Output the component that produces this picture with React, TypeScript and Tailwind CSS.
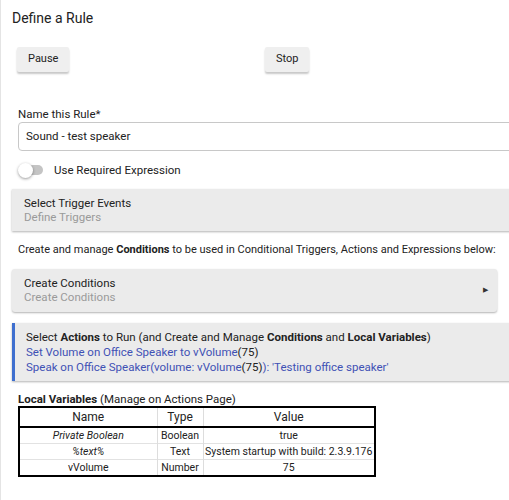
export default function App() {
    const vars = [
        { name: "Private Boolean", italic: true, type: "Boolean", value: "true" },
        { name: "%text%", italic: true, type: "Text", value: "System startup with build: 2.3.9.176" },
        { name: "vVolume", italic: false, type: "Number", value: "75" },
    ];

    return (
        <div className="w-[509px] h-[500px] overflow-hidden bg-white">
            <div className="w-[540px] h-full border-l border-[#e4e4e4] pl-[11px] pt-[10px] text-[#222] font-['Roboto',sans-serif]">
                <h1 className="text-[14px] leading-[17px] font-normal">Define a Rule</h1>

                <div className="mt-[18px] ml-[5px] grid grid-cols-[248px_248px]">
                    <div>
                        <button className="h-[25px] px-[11px] rounded-[2px] bg-[#efefef] text-[11px] shadow-[0_2px_2px_rgba(0,0,0,0.22)]">
                            Pause
                        </button>
                    </div>
                    <div>
                        <button className="h-[25px] px-[11px] rounded-[2px] bg-[#efefef] text-[11px] shadow-[0_2px_2px_rgba(0,0,0,0.22)]">
                            Stop
                        </button>
                    </div>
                </div>

                <div className="mt-[35px] ml-[6px]">
                    <div className="text-[11.5px] leading-[14px]">Name this Rule*</div>
                    <div className="mt-[1px] h-[29px] rounded-[4px] border border-[#c8c8c8] px-[7px] flex items-center text-[11.5px]">
                        Sound - test speaker
                    </div>
                </div>

                <div className="mt-[12px] ml-[6px] flex items-center gap-[11px] h-[15px]">
                    <div className="relative w-[25px] h-[15px] flex items-center">
                        <div className="ml-[3px] w-[22px] h-[10px] rounded-full bg-[#c4c4c4]" />
                        <div className="absolute left-0 top-0 w-[15px] h-[15px] rounded-full bg-white shadow-[0_1px_3px_rgba(0,0,0,0.4)]" />
                    </div>
                    <span className="text-[11.5px] leading-[15px]">Use Required Expression</span>
                </div>

                <div className="mt-[11px] h-[42px] bg-[#ebebeb] shadow-[0_1px_2px_rgba(0,0,0,0.3)] pl-[12px] pt-[7px] text-[11.5px] leading-[14px]">
                    <div>Select Trigger Events</div>
                    <div className="text-[#9a9a9a]">Define Triggers</div>
                </div>

                <p className="mt-[12px] ml-[6px] text-[11px] leading-[14px]">
                    Create and manage <b className="font-bold">Conditions</b> to be used in Conditional Triggers, Actions and Expressions below:
                </p>

                <div className="mt-[12px] w-[485px] h-[43px] rounded-[3px] bg-[#ebebeb] shadow-[0_1px_2px_rgba(0,0,0,0.3)] pl-[12px] pr-[9px] flex items-center justify-between text-[11.5px] leading-[14px]">
                    <div>
                        <div>Create Conditions</div>
                        <div className="text-[#9a9a9a]">Create Conditions</div>
                    </div>
                    <span className="text-[7px] text-[#333]">▶</span>
                </div>

                <div className="mt-[11px] h-[58px] bg-[#ebebeb] border-l-[3px] border-[#3f6fcf] shadow-[0_1px_2px_rgba(0,0,0,0.3)] pl-[11px] pt-[7px] text-[11.5px] leading-[15px]">
                    <div>
                        Select <b>Actions</b> to Run (and Create and Manage <b>Conditions</b> and <b>Local Variables</b>)
                    </div>
                    <div className="text-[#3f51b5]">
                        Set Volume on Office Speaker to vVolume<span className="text-[#222]">(75)</span>
                    </div>
                    <div className="text-[#3f51b5]">
                        Speak on Office Speaker(volume: vVolume<span className="text-[#222]">(75)</span>): 'Testing office speaker'
                    </div>
                </div>

                <div className="mt-[11px] ml-[6px] text-[11.5px] leading-[14px]">
                    <b>Local Variables</b> (Manage on Actions Page)
                </div>
                <table className="ml-[6px] w-[358px] table-fixed border-collapse border-2 border-black text-[10.5px] text-center">
                    <thead>
                        <tr className="border-b-2 border-black h-[20px]">
                            <th className="w-[138px] font-normal text-[12px] border-r border-[#ddd]">Name</th>
                            <th className="w-[46px] font-normal text-[12px] border-r border-[#ddd]">Type</th>
                            <th className="font-normal text-[12px]">Value</th>
                        </tr>
                    </thead>
                    <tbody>
                        {vars.map((v) => (
                            <tr key={v.name} className="h-[16px] border-t border-[#e2e2e2] first:border-t-0">
                                <td className={`border-r border-[#ddd] leading-[15px] ${v.italic ? "italic" : ""}`}>{v.name}</td>
                                <td className="border-r border-[#ddd] leading-[15px]">{v.type}</td>
                                <td className="leading-[15px] whitespace-nowrap">{v.value}</td>
                            </tr>
                        ))}
                    </tbody>
                </table>
            </div>
        </div>
    )
}
